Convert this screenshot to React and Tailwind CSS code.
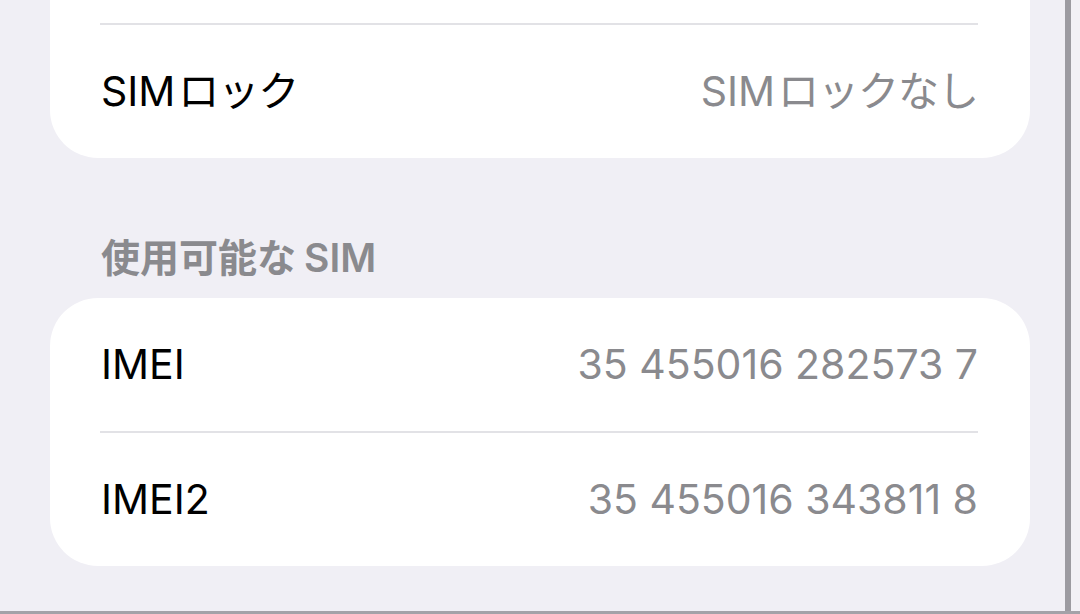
import React from 'react';

const font = { fontFamily: 'Inter, "Noto Sans CJK JP", sans-serif' };

// iOS puts a little air between Latin and Japanese runs
const Mixed = ({ latin, jp, first = 'latin' }) =>
  first === 'latin' ? (
    <>
      {latin}
      <span className="ml-[3px] tracking-[-1px]">{jp}</span>
    </>
  ) : (
    <>
      {jp}
      <span className="ml-[8px]">{latin}</span>
    </>
  );

const Row = ({ label, value }) => (
  <div className="flex h-[133px] items-center justify-between pl-[51px] pr-[52px] text-[41px] leading-none">
    <span className="text-black">{label}</span>
    <span className="text-[#8a8a8e]">{value}</span>
  </div>
);

const Divider = () => <div className="ml-[50px] mr-[52px] h-[2px] bg-[#e2e2e6]" />;

const App = () => {
  return (
    <div className="flex h-[614px] w-[1080px] flex-col overflow-hidden bg-[#f0eff5]" style={font}>
      <div className="flex flex-1">
        <div className="w-[1065px]">
          <div className="ml-[50px] w-[980px] rounded-b-[48px] bg-white">
            <div className="h-[23px]" />
            <Divider />
            <Row
              label={<Mixed latin="SIM" jp="ロック" />}
              value={<Mixed latin="SIM" jp="ロックなし" />}
            />
          </div>

          <div className="pl-[101px] pt-[80px] pb-[20px] text-[39px] font-semibold leading-[40px] text-[#8a8a8e]">
            <Mixed first="jp" jp="使用可能な" latin="SIM" />
          </div>

          <div className="ml-[50px] w-[980px] rounded-[48px] bg-white">
            <Row label="IMEI" value="35 455016 282573 7" />
            <Divider />
            <Row label="IMEI2" value="35 455016 343811 8" />
          </div>
        </div>
        <div className="w-[6px] bg-[#9c9ba1]" />
        <div className="flex-1 bg-[#f2f1f6]" />
      </div>
      <div className="h-[3px] bg-[#a3a2a8]" />
    </div>
  );
};

export default App;
